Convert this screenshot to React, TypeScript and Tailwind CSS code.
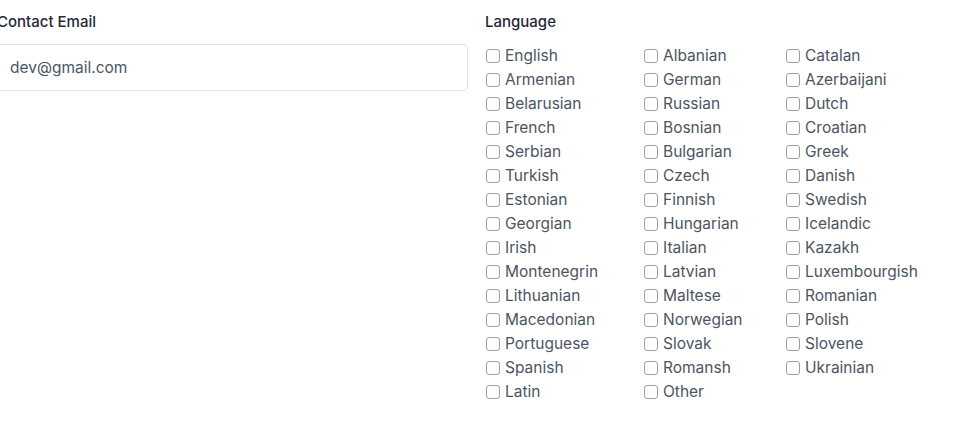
const LANGUAGES = [
  "English", "Albanian", "Catalan",
  "Armenian", "German", "Azerbaijani",
  "Belarusian", "Russian", "Dutch",
  "French", "Bosnian", "Croatian",
  "Serbian", "Bulgarian", "Greek",
  "Turkish", "Czech", "Danish",
  "Estonian", "Finnish", "Swedish",
  "Georgian", "Hungarian", "Icelandic",
  "Irish", "Italian", "Kazakh",
  "Montenegrin", "Latvian", "Luxembourgish",
  "Lithuanian", "Maltese", "Romanian",
  "Macedonian", "Norwegian", "Polish",
  "Portuguese", "Slovak", "Slovene",
  "Spanish", "Romansh", "Ukrainian",
  "Latin", "Other",
];

export default function App() {
  return (
    <div className="flex min-h-screen bg-white pt-[12px] font-['Inter','Liberation_Sans',sans-serif] text-[#374151]">
      {/* ---- Contact email ---- */}
      <div className="ml-[-3px] flex w-[471px] shrink-0 flex-col">
        <label className="text-[15px] font-medium leading-5 text-[#1f2937]">
          Contact Email
        </label>
        <input
          type="email"
          defaultValue="dev@gmail.com"
          className="mt-[12px] h-[47px] w-full rounded-[4px] border border-[#e2e3e6] px-3 text-[15.5px] text-[#4b5563] outline-none"
        />
      </div>

      {/* ---- Language checkboxes ---- */}
      <div className="ml-[17px] flex flex-col">
        <span className="text-[15px] font-medium leading-5 text-[#1f2937]">
          Language
        </span>
        <div className="mt-[12px] grid grid-cols-[158px_142px_auto]">
          {LANGUAGES.map((lang) => (
            <label key={lang} className="flex h-6 items-center gap-[5px]">
              <span className="ml-px h-[14px] w-[14px] shrink-0 rounded-[3px] border border-[#9aa1ad] bg-white" />
              <span className="text-[15.5px] leading-6 text-[#4b5563]">{lang}</span>
            </label>
          ))}
        </div>
      </div>
    </div>
  );
}
